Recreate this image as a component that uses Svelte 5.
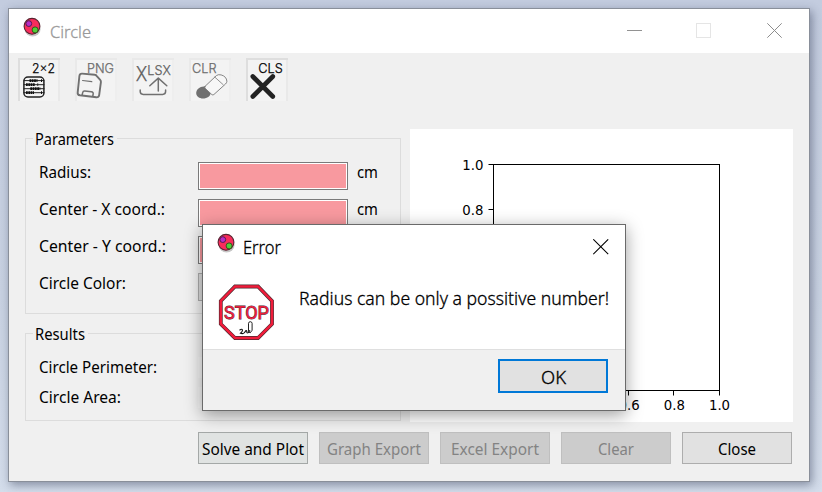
<script>
  const tools = ['calc', 'png', 'xlsx', 'clr', 'cls'];
  const fields = [
    { label: 'Radius:', width: 52 },
    { label: 'Center - X coord.:', width: 126 },
    { label: 'Center - Y coord.:', width: 127 },
  ];
  const results = [
    { label: 'Circle Perimeter:', width: 118 },
    { label: 'Circle Area:', width: 82 },
  ];
  const actions = [
    { label: 'Solve and Plot', width: 102, kind: 'hot' },
    { label: 'Graph Export', width: 94, kind: 'off' },
    { label: 'Excel Export', width: 88, kind: 'off' },
    { label: 'Clear', width: 36, kind: 'off' },
    { label: 'Close', width: 38, kind: '' },
  ];
  const xTicks = [3, 4, 5];
  const yTicks = [4, 5];
</script>

{#snippet fit(text, width, size = 16)}
  <svg class="fit" {width} height="20" style:font-size="{size}px">
    <text x="0" y="16" textLength={width} lengthAdjust="spacingAndGlyphs">{text}</text>
  </svg>
{/snippet}

{#snippet logo()}
  <svg class="logo" width="22" height="24" viewBox="0 0 22 24">
    <ellipse cx="11.6" cy="14" rx="8" ry="7.5" fill="#000" opacity=".22" />
    <circle cx="11" cy="11.3" r="7.9" fill="#f82c5c" stroke="#5a2430" stroke-width="1.1" />
    <circle cx="7.8" cy="8.6" r="2.9" fill="#b82cc8" stroke="#541c50" />
    <circle cx="14.1" cy="14.9" r="3" fill="#50cf38" stroke="#35551c" />
  </svg>
{/snippet}

<div class="desktop">
  <main class="window">
    <header class="titlebar">
      {@render logo()}
      <div class="caption">{@render fit('Circle', 41, 17)}</div>
      <svg class="controls" width="156" height="16" viewBox="0 0 156 16" fill="none">
        <path d="M0 7.5h15" stroke="#929292" />
        <rect x="69.5" y=".5" width="14" height="14" stroke="#e5e5e5" />
        <path d="M140.3 .3l14.4 14.4M154.7 .3l-14.4 14.4" stroke="#8c8c8c" />
      </svg>
    </header>

    <nav class="toolbar">
      {#each tools as tool}
        <button class="tool" class:active={tool === 'calc' || tool === 'cls'} aria-label={tool}>
          <svg width="42" height="43" viewBox="0 0 42 43" fill="none" stroke-linecap="round" stroke-linejoin="round">
            {#if tool === 'calc'}
              <text x="14" y="15" font-size="12.5" textLength="23" lengthAdjust="spacingAndGlyphs" fill="#000" stroke="#000">2×2</text>
              <rect x="5.9" y="19" width="20" height="20" rx="4" stroke="#222" stroke-width="1.5" />
              <path d="M6 22.6h20M6 26.7h20M6 30.7h20M6 34.7h20" stroke="#222" />
              <path d="M11.5 22.6h8M23 22.6h1M8 26.7h9M19.4 26.7h.8M12.3 30.7h10M8 34.7h8M23 34.7h1" stroke="#111" stroke-width="2.7" stroke-dasharray="1.8 .5" stroke-linecap="butt" />
            {:else if tool === 'png'}
              <text x="12" y="15.3" font-size="12.5" textLength="27" lengthAdjust="spacingAndGlyphs" fill="#6c6c6c" stroke="#6c6c6c">PNG</text>
              <path d="M7 15.6l12.8 1.2q1 0 1.8 1l3.6 4q.9 1 .7 2.4l-1.7 12.7q-.3 2.7-2.9 2.4l-16.4-2q-2.6-.4-2.2-3l1.7-16.3q.3-2.5 2.6-2.4z" stroke="#707070" stroke-width="1.9" />
              <path d="M7.6 22.5l9.2 1.1" stroke="#707070" stroke-width="1.2" />
              <path d="M7.2 36.8l.4-2q.4-2 2.2-1.8l6.6.8q2 .2 1.8 2l-.4 2.2" stroke="#707070" stroke-width="1.5" />
            {:else if tool === 'xlsx'}
              <text x="3.7" y="22.6" font-size="20.5" textLength="11.6" lengthAdjust="spacingAndGlyphs" fill="#606060" stroke="#606060">X</text>
              <text x="15.3" y="17" font-size="12.5" textLength="23.5" lengthAdjust="spacingAndGlyphs" fill="#606060" stroke="#606060">LSX</text>
              <path d="M26.3 33V20.2M17.8 27.7l8.5-7.6 8.5 7.6" stroke="#707070" stroke-width="1.5" />
              <path d="M8.2 32v1.6q0 2.8 3 2.8h19.4q3 0 3-2.8V32" stroke="#707070" stroke-width="1.5" />
            {:else if tool === 'clr'}
              <text x="3" y="15.3" font-size="12.5" textLength="24.5" lengthAdjust="spacingAndGlyphs" fill="#6c6c6c" stroke="#6c6c6c">CLR</text>
              <path d="M16.2 28.6c-4.8-.8-9 2.7-9 6.4 0 4.2 5 6.6 9.8 5 2.8-1 4.2-2.6 4.6-4.6z" fill="#707070" />
              <path d="M16 28.4L27.4 17.6q1.7-1.4 4.7-.7 5.4 1.5 5.8 6.4-.1 1.4-1.4 2.7L24.9 36.5q-1 .9-2 .1l-6.3-5.8q-1.3-1.2-.6-2.4z" fill="#f7f7f7" stroke="#777" stroke-width=".9" />
              <path d="M25.8 19.1l8.4 7.6" stroke="#777" stroke-width=".8" />
            {:else}
              <text x="12.3" y="15" font-size="12.5" textLength="24.5" lengthAdjust="spacingAndGlyphs" fill="#000" stroke="#000">CLS</text>
              <path d="M6.8 18.5l20 20M26.8 18.5l-20 20" stroke="#222" stroke-width="4.6" />
            {/if}
          </svg>
        </button>
      {/each}
    </nav>

    <div class="content">
      <div class="forms">
        <section class="group params">
          <div class="legend">{@render fit('Parameters', 79)}</div>
          {#each fields as f}
            <div class="row">
              <div class="label">{@render fit(f.label, f.width)}</div>
              <div class="input"></div>
              <div class="unit">{@render fit('cm', 21)}</div>
            </div>
          {/each}
          <div class="row">
            <div class="label">{@render fit('Circle Color:', 87)}</div>
            <div class="picker"></div>
          </div>
        </section>
        <section class="group results">
          <div class="legend">{@render fit('Results', 50)}</div>
          {#each results as r}
            <div class="row">
              <div class="label">{@render fit(r.label, r.width)}</div>
              <div class="output"></div>
            </div>
          {/each}
        </section>
      </div>

      <svg class="plot" width="383" height="293" viewBox="0 0 383 293">
        <rect x="83.5" y="35.5" width="226" height="226" fill="none" stroke="#000" />
        {#each xTicks as t}
          <path d="M{Math.floor(83 + t * 45.2) + 0.5} 262v4.5" stroke="#000" />
          <text x={83.5 + t * 45.2} y="281" text-anchor="middle">{(t / 5).toFixed(1)}</text>
        {/each}
        {#each yTicks as t}
          <path d="M78.5 {Math.floor(261 - t * 45.2) + 0.5}h5" stroke="#000" />
          <text x="73.5" y={266.5 - t * 45.2} text-anchor="end">{(t / 5).toFixed(1)}</text>
        {/each}
      </svg>
    </div>

    <footer class="actions">
      {#each actions as a}
        <button class="btn {a.kind}">{@render fit(a.label, a.width)}</button>
      {/each}
    </footer>
  </main>

  <div class="dialog" role="alertdialog">
    <div class="dialog-title">
      {@render logo()}
      <div class="caption">{@render fit('Error', 38, 17.5)}</div>
      <svg class="close" width="16" height="16" viewBox="0 0 16 16">
        <path d="M.3 .3l14.9 14.9M15.2 .3L.3 15.2" stroke="#000" stroke-width="1.05" />
      </svg>
    </div>
    <div class="message">
      <svg width="57" height="57" viewBox="0 0 57 57" fill="none">
        <path d="M17 2.5h23L54 17v23L40 54H17L2.8 40V17z" fill="#fff" stroke="#4a2a30" stroke-width="3.8" />
        <path d="M17 2.5h23L54 17v23L40 54H17L2.8 40V17z" stroke="#f01c3a" stroke-width="2.5" />
        <text class="stop" x="6" y="34.6" textLength="45" lengthAdjust="spacingAndGlyphs">STOP</text>
        <path d="M21.5 46.3q2.6-2 3 0-.1 1.5-2 2.9 1.8.8 3.3-.1 1.4-1 2.2-2.6.9-.3.8 1.4.1 1.6 1.5.7l1.7-2.4" stroke="#111" stroke-width="1.1" />
        <path d="M30.5 47.5v-8.2q.2-1.6 1.8-1.6t1.8 1.6v7l-2 2.6z" stroke="#222" stroke-width="1" />
      </svg>
      <div class="text">{@render fit('Radius can be only a possitive number!', 310, 18)}</div>
    </div>
    <div class="dialog-footer">
      <button class="ok">{@render fit('OK', 25, 17.5)}</button>
    </div>
  </div>
</div>

<style>
  :global(body) { margin: 0; }
  .desktop {
    box-sizing: border-box;
    width: 822px;
    height: 492px;
    padding: 8px;
    overflow: hidden;
    position: relative;
    background: linear-gradient(#c3ccdf, #c9d2e2 60%, #d4ddeb);
    font-family: "Noto Sans", "Open Sans", sans-serif;
    color: #000;
  }
  button { margin: 0; padding: 0; font: inherit; color: inherit; border-radius: 0; box-sizing: border-box; }
  svg { display: block; flex: none; }
  .fit { overflow: visible; }
  .fit text { fill: currentColor; }
  .window {
    box-sizing: border-box;
    width: 802px;
    height: 474px;
    border: 1px solid #898f9a;
    background: #f0f0f0;
    box-shadow: 2px 3px 9px rgba(35, 45, 70, .45);
    display: flex;
    flex-direction: column;
  }
  .titlebar {
    box-sizing: border-box;
    height: 44px;
    background: #fff;
    display: flex;
    align-items: flex-start;
    padding: 6px 26px 0 12px;
  }
  .titlebar .caption { margin: 7px 0 0 7px; color: #999; }
  .caption, .text, .ok { font-weight: 300; }
  .caption text, .text text, .ok text,
  .caption .fit, .text .fit, .ok .fit { stroke: currentColor; stroke-width: .3px; }
  .caption, .text, .ok { stroke: currentColor; stroke-width: .3px; }
  .controls { margin: 8px 0 0 auto; }
  .toolbar { display: flex; gap: 15px; padding: 5px 9px 0; height: 71px; box-sizing: border-box; }
  .tool {
    width: 42px;
    height: 43px;
    border: 0;
    background: #f3f3f3;
    box-shadow: inset 2px 2px 0 #e9e9e9, inset -2px 0 0 #eee;
    font-family: Inter, Roboto, sans-serif;
    font-weight: 300;
  }
  .tool text { stroke-width: .25px; }
  .tool.active { box-shadow: inset 2px 2px 0 #dedede, inset -2px 0 0 #e9e9e9; }
  .content { display: flex; gap: 9px; padding: 5px 16px 0; height: 298px; box-sizing: border-box; }
  .forms { display: flex; flex-direction: column; width: 376px; padding-top: 9px; }
  .group { box-sizing: border-box; border: 1px solid #dcdcdc; display: flex; flex-direction: column; padding-left: 13px; }
  .params { height: 176px; gap: 9px; }
  .results { height: 88px; margin-top: 19px; gap: 9px; }
  .legend { align-self: flex-start; margin: -10px 0 4px -6px; padding: 0 3px 0 2px; background: #f0f0f0; }
  .row { display: flex; }
  .params .row { height: 28px; }
  .results .row { height: 21px; }
  .label { width: 159px; }
  .input { box-sizing: border-box; width: 150px; height: 28px; background: #f8999f; border: 1px solid #7a7a7a; box-shadow: inset 0 0 0 1px #fff; }
  .unit { margin-left: 9px; }
  .picker { box-sizing: border-box; width: 150px; height: 28px; border: 1px solid #adadad; background: #ddd; }
  .output { width: 150px; height: 21px; background: #f4f4f4; }
  .plot { background: #fff; font-family: "DejaVu Sans", sans-serif; font-size: 13.3px; fill: #000; }
  .actions { display: flex; gap: 11px; padding: 10px 0 0 189px; }
  .btn {
    width: 110px;
    height: 32px;
    display: flex;
    align-items: center;
    justify-content: center;
    border: 1px solid #adadad;
    background: #e1e1e1;
    padding-top: 2px;
  }
  .btn.hot { background: #e0e3e2; border-color: #a4a8a7; }
  .btn.off { background: #ccc; border-color: #bfbfbf; color: #838383; }
  .dialog {
    position: absolute;
    left: 202px;
    top: 224px;
    box-sizing: border-box;
    width: 424px;
    height: 187px;
    border: 1px solid #6a6a6a;
    background: #fff;
    box-shadow: 0 4px 16px rgba(0, 0, 0, .38);
    display: flex;
    flex-direction: column;
  }
  .dialog-title { display: flex; height: 60px; padding: 6px 16px 0 12px; box-sizing: border-box; }
  .dialog-title .caption { margin: 7px 0 0 6px; }
  .close { margin: 8px 0 0 auto; }
  .message { display: flex; height: 64px; padding-left: 15px; }
  .text { margin: 4px 0 0 24px; }
  .message > svg { margin-top: -1px; }
  .stop {
    font-family: Roboto, "Liberation Sans", sans-serif;
    font-size: 19px;
    font-weight: 400;
    fill: #ee1c3c;
    stroke: #4a2a30;
    stroke-width: .9px;
    paint-order: stroke;
  }
  .dialog-footer {
    flex: 1;
    border-top: 1px solid #dfdfdf;
    background: #f0f0f0;
    display: flex;
    justify-content: flex-end;
    padding: 9px 17px 0 0;
  }
  .ok {
    width: 110px;
    height: 34px;
    border: 2px solid #0078d7;
    background: #e1e1e1;
    display: flex;
    align-items: center;
    justify-content: center;
    padding-top: 4px;
  }
</style>
